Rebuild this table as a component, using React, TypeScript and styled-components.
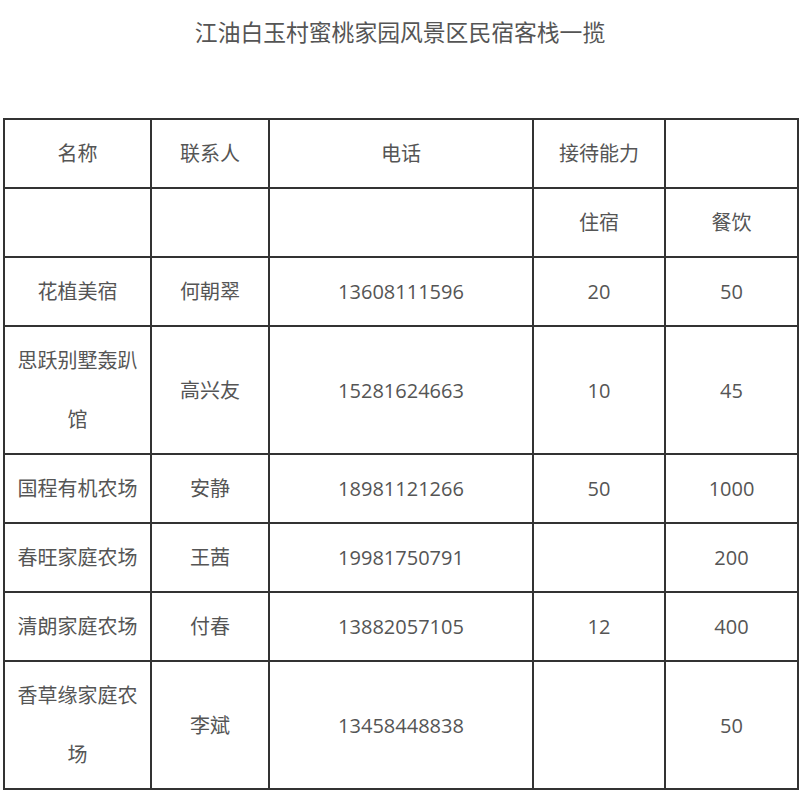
import styled, { createGlobalStyle } from "styled-components";

const GlobalStyle = createGlobalStyle`
  html, body {
    margin: 0;
    padding: 0;
    background: #ffffff;
  }
  body {
    font-family: "Open Sans", "Noto Sans CJK SC", sans-serif;
    color: #555555;
  }
`;

const Page = styled.div`
  width: 800px;
  padding: 0 3px;
  box-sizing: border-box;
`;

const Title = styled.h1`
  margin: 18px 0 70px;
  font-size: 22.8px;
  line-height: 30px;
  font-weight: 400;
  text-align: center;
  color: #555555;
`;

const Table = styled.table`
  width: 794px;
  border-collapse: collapse;
  table-layout: fixed;
`;

const Col = styled.col<{ $width: number }>`
  width: ${({ $width }) => `${$width}px`};
`;

const Cell = styled.td`
  border: 2px solid #333333;
  padding: 4px 8px;
  font-size: 20px;
  line-height: 59px;
  text-align: center;
  vertical-align: middle;
  color: #555555;
  word-break: break-all;
  overflow: hidden;
`;

const COLUMN_WIDTHS = [147, 118, 264, 132, 133];

type Row = [string, string, string, string, string];

const ROWS: Row[] = [
  ["名称", "联系人", "电话", "接待能力", ""],
  ["", "", "", "住宿", "餐饮"],
  ["花植美宿", "何朝翠", "13608111596", "20", "50"],
  ["思跃别墅轰趴馆", "高兴友", "15281624663", "10", "45"],
  ["国程有机农场", "安静", "18981121266", "50", "1000"],
  ["春旺家庭农场", "王茜", "19981750791", "", "200"],
  ["清朗家庭农场", "付春", "13882057105", "12", "400"],
  ["香草缘家庭农场", "李斌", "13458448838", "", "50"],
];

const App = () => {
  return (
    <Page>
      <GlobalStyle />
      <Title>江油白玉村蜜桃家园风景区民宿客栈一揽</Title>
      <Table>
        <colgroup>
          {COLUMN_WIDTHS.map((w, i) => (
            <Col key={i} $width={w} />
          ))}
        </colgroup>
        <tbody>
          {ROWS.map((row, i) => (
            <tr key={i}>
              {row.map((value, j) => (
                <Cell key={j}>{value}</Cell>
              ))}
            </tr>
          ))}
        </tbody>
      </Table>
    </Page>
  );
};

export default App;
